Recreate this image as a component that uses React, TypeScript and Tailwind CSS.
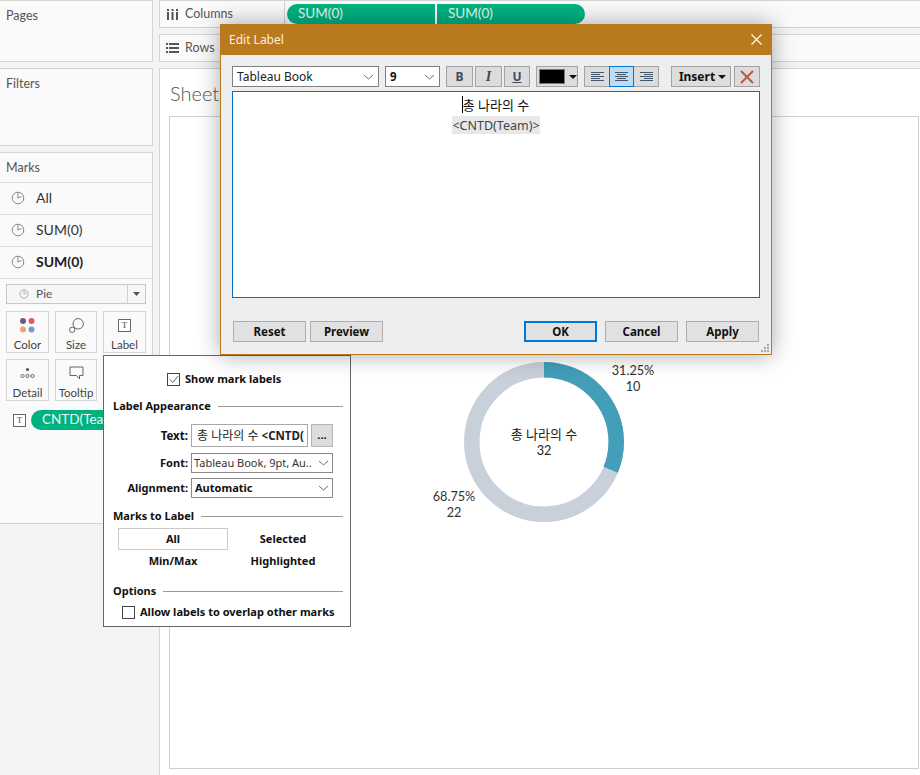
import React from 'react';

const PieIcon = ({ size = 14, color = '#8a8a8a' }: { size?: number; color?: string }) => (
  <svg width={size} height={size} viewBox="0 0 14 14" fill="none" stroke={color} strokeWidth="1">
    <circle cx="7" cy="7" r="5.8" />
    <path d="M7 1.5V7L10.5 5.5" />
  </svg>
);

const Chevron = ({ color = '#6b6b6b' }: { color?: string }) => (
  <svg width="11" height="6" viewBox="0 0 11 6" fill="none" stroke={color} strokeWidth="1">
    <path d="M1 1L5.5 5L10 1" />
  </svg>
);

const Caret = () => (
  <svg width="8" height="4" viewBox="0 0 8 4" fill="#111">
    <path d="M0 0H8L4 4Z" />
  </svg>
);

const AlignIcon = ({ side }: { side: 'left' | 'center' | 'right' }) => {
  const x = (w: number) => (side === 'left' ? 0 : side === 'center' ? (13 - w) / 2 : 13 - w);
  const rows = [13, 9, 13, 9, 13];
  return (
    <svg width="13" height="9" viewBox="0 0 13 9" stroke="#44566c" strokeWidth="1">
      {rows.map((w, i) => (
        <path key={i} d={`M${x(w)} ${i * 2 + 0.5}H${x(w) + w}`} />
      ))}
    </svg>
  );
};

const TBox = () => (
  <span className="flex h-[13px] w-[13px] items-center justify-center border border-[#666] bg-white text-[9px] leading-none text-[#444] [font-family:'Liberation_Serif',serif]">
    T
  </span>
);

const PanelTitle = ({ children }: { children: React.ReactNode }) => (
  <div className="pl-[6px] pt-[7px] text-[12.5px] leading-[16px] text-[#555]">{children}</div>
);

const MarkRow = ({ label, bold }: { label: string; bold?: boolean }) => (
  <div className="flex h-[32px] items-center border-b border-[#e0e0e0] pb-[2px] pl-[11px]">
    <PieIcon />
    <span className={`ml-[11px] text-[14px] ${bold ? 'font-bold text-[#222]' : 'text-[#333]'}`}>{label}</span>
  </div>
);

const MarkCard = ({ label, icon, className = 'w-[43px]' }: { label: string; icon: React.ReactNode; className?: string }) => (
  <div className={`flex h-[42px] flex-col items-center border border-[#d4d4d4] bg-[#fafafa] ${className}`}>
    <div className="flex h-[26px] items-center justify-center">{icon}</div>
    <span className="text-[11.5px] leading-[13px] text-[#444]">{label}</span>
  </div>
);

const ToolButton = ({ children, className = '' }: { children: React.ReactNode; className?: string }) => (
  <div className={`flex h-[21px] items-center justify-center border border-[#a3a3a3] bg-[#dcdcdc] text-[12px] font-bold text-[#3c4a5c] ${className}`}>
    {children}
  </div>
);

const DialogButton = ({ label, className = '' }: { label: string; className?: string }) => (
  <div className={`flex h-[21px] w-[73px] items-center justify-center border border-[#adadad] bg-[#e1e1e1] text-[11.5px] font-bold text-[#111] ${className}`}>
    {label}
  </div>
);

const SectionTitle = ({ label, className = '' }: { label: string; className?: string }) => (
  <div className={`flex items-center pl-[9px] pr-[7px] ${className}`}>
    <span className="text-[11px] font-bold leading-[14px] text-[#111]">{label}</span>
    <span className="ml-[7px] h-px flex-1 bg-[#999]" />
  </div>
);

const LabelPopover = () => (
  <div className="absolute left-[103px] top-[355px] z-10 h-[272px] w-[248px] border border-[#666] bg-white [font-family:'Noto_Sans','Noto_Sans_CJK_KR',sans-serif]">
    <div className="mt-[16px] flex h-[14px] items-center pl-[63px]">
      <span className="flex h-[13px] w-[13px] items-center justify-center border border-[#444]">
        <svg width="10" height="9" viewBox="0 0 10 9" fill="none" stroke="#666" strokeWidth="1">
          <path d="M1 4.5L3.8 7.5L9 1" />
        </svg>
      </span>
      <span className="ml-[5px] text-[11px] font-bold text-[#111]">Show mark labels</span>
    </div>
    <SectionTitle label="Label Appearance" className="mt-[13px]" />
    <div className="mt-[11px] flex h-[23px] items-center">
      <span className="w-[84px] text-right text-[11.5px] font-bold text-[#111]">Text:</span>
      <div className="ml-[3px] flex h-[23px] w-[117px] items-center overflow-hidden whitespace-nowrap border border-[#a8a8a8] pl-[5px] text-[11.5px] font-bold text-[#222]">
        <span className="text-[12px] font-normal">총 나라의 수&nbsp;</span>&lt;CNTD(
      </div>
      <div className="ml-[3px] flex h-[23px] w-[22px] items-center justify-center border border-[#b5b5b5] bg-[#dcdcdc] text-[11px] font-bold text-[#111]">
        ...
      </div>
    </div>
    <div className="mt-[6px] flex h-[20px] items-center">
      <span className="w-[84px] text-right text-[11px] font-bold text-[#111]">Font:</span>
      <div className="ml-[3px] flex h-[20px] w-[142px] items-center justify-between border border-[#8a8a8a] pl-[2px] pr-[3px] text-[11px] text-[#333]">
        <span>Tableau Book, 9pt, Au..</span>
        <Chevron />
      </div>
    </div>
    <div className="mt-[5px] flex h-[20px] items-center">
      <span className="w-[84px] text-right text-[11px] font-bold text-[#111]">Alignment:</span>
      <div className="ml-[3px] flex h-[20px] w-[142px] items-center justify-between border border-[#8a8a8a] pl-[3px] pr-[3px] text-[11px] font-bold text-[#111]">
        <span>Automatic</span>
        <Chevron />
      </div>
    </div>
    <SectionTitle label="Marks to Label" className="mt-[11px]" />
    <div className="ml-[14px] mt-[5px] grid w-[220px] grid-cols-2 text-center text-[11px] font-bold text-[#111]">
      <div className="flex h-[22px] items-center justify-center border border-[#c9c9c9]">All</div>
      <div className="flex h-[22px] items-center justify-center">Selected</div>
      <div className="flex h-[22px] items-center justify-center">Min/Max</div>
      <div className="flex h-[22px] items-center justify-center">Highlighted</div>
    </div>
    <SectionTitle label="Options" className="mt-[12px]" />
    <div className="ml-[18px] mt-[7px] flex h-[14px] items-center">
      <span className="h-[13px] w-[13px] border border-[#444]" />
      <span className="ml-[5px] text-[11px] font-bold text-[#111]">Allow labels to overlap other marks</span>
    </div>
  </div>
);

const EditLabelDialog = () => (
  <div className="absolute left-[220px] top-[24px] z-20 h-[331px] w-[552px] border border-[#b87a1c] bg-[#eeeeee] shadow-[0_0_22px_rgba(0,0,0,0.35)] [font-family:'Noto_Sans','Noto_Sans_CJK_KR',sans-serif]">
    <div className="-mx-px -mt-px flex h-[31px] items-center justify-between bg-[#b87a1c] pl-[9px] pr-[10px]">
      <span className="text-[12px] text-[#f7efe2]">Edit Label</span>
      <svg width="11" height="11" viewBox="0 0 11 11" stroke="#fff" strokeWidth="1.2">
        <path d="M0.5 0.5L10.5 10.5M10.5 0.5L0.5 10.5" />
      </svg>
    </div>
    <div className="pl-[11px] pt-[11px]">
      <div className="flex items-center">
        <div className="flex h-[21px] w-[147px] items-center justify-between border border-[#7f7f7f] bg-white pl-[4px] pr-[4px] text-[12px] text-[#222]">
          <span>Tableau Book</span>
          <Chevron />
        </div>
        <div className="ml-[6px] flex h-[21px] w-[55px] items-center justify-between border border-[#7f7f7f] bg-white pl-[4px] pr-[4px] text-[11.5px] font-bold text-[#111]">
          <span>9</span>
          <Chevron />
        </div>
        <ToolButton className="ml-[6px] w-[27px]">B</ToolButton>
        <ToolButton className="ml-[2px] w-[27px] italic [font-family:'Liberation_Serif',serif] !text-[14px]">I</ToolButton>
        <ToolButton className="ml-[2px] w-[26px] underline">U</ToolButton>
        <div className="ml-[6px] flex h-[21px] w-[42px] items-center border border-[#a3a3a3] bg-[#dcdcdc] pl-[2px]">
          <span className="h-[15px] w-[26px] border border-[#777] bg-black" />
          <span className="ml-[4px] flex"><Caret /></span>
        </div>
        <div className="ml-[6px] flex h-[21px] w-[75px] border border-[#a3a3a3] bg-[#dcdcdc]">
          <div className="flex flex-1 items-center justify-center"><AlignIcon side="left" /></div>
          <div className="-my-px flex w-[25px] items-center justify-center border border-[#0078d7] bg-[#bfdcf5]"><AlignIcon side="center" /></div>
          <div className="flex flex-1 items-center justify-center"><AlignIcon side="right" /></div>
        </div>
        <ToolButton className="ml-[12px] w-[60px] pl-[3px] !text-[#111]">
          Insert<span className="ml-[3px] flex"><Caret /></span>
        </ToolButton>
        <ToolButton className="ml-[3px] w-[26px]">
          <svg width="14" height="14" viewBox="0 0 14 14" stroke="#b85a3e" strokeWidth="2">
            <path d="M1 1L13 13M13 1L1 13" />
          </svg>
        </ToolButton>
      </div>
      <div className="mt-[4px] flex h-[207px] w-[528px] flex-col items-center border border-[#0070c9] bg-white">
        <div className="relative mt-[3px] h-[21px] text-[13px] leading-[20px] text-[#111]">
          <span className="absolute left-[-1px] top-px h-[17px] w-px bg-black" />
          총 나라의 수
        </div>
        <div className="flex h-[18px] items-center bg-[#e8e8e8] pt-[2px] text-[12.5px] text-[#444]">&lt;CNTD(Team)&gt;</div>
      </div>
      <div className="mt-[23px] flex w-[528px] pl-px">
        <DialogButton label="Reset" />
        <DialogButton label="Preview" className="ml-[4px]" />
        <DialogButton label="OK" className="ml-[141px] !border-2 !border-[#0078d7]" />
        <DialogButton label="Cancel" className="ml-[8px]" />
        <DialogButton label="Apply" className="ml-[8px]" />
      </div>
    </div>
    <svg className="absolute bottom-[1px] right-[1px]" width="9" height="9" viewBox="0 0 9 9" fill="#aaa">
      <rect x="6" y="0" width="2" height="2" />
      <rect x="3" y="3" width="2" height="2" />
      <rect x="6" y="3" width="2" height="2" />
      <rect x="0" y="6" width="2" height="2" />
      <rect x="3" y="6" width="2" height="2" />
      <rect x="6" y="6" width="2" height="2" />
    </svg>
  </div>
);

const Donut = () => {
  const r = 72.25;
  const circumference = 2 * Math.PI * r;
  return (
    <div className="relative h-[160px] w-[160px] text-[12.7px] leading-[16px] text-[#333]">
      <svg width="160" height="160" viewBox="0 0 160 160" fill="none" strokeWidth="15.5">
        <circle cx="80" cy="80" r={r} stroke="#c8d0d9" />
        <circle
          cx="80"
          cy="80"
          r={r}
          stroke="#429eb9"
          strokeDasharray={`${circumference * 0.3125} ${circumference}`}
          transform="rotate(-90 80 80)"
        />
      </svg>
      <div className="absolute left-[30px] top-[64px] w-[100px] text-center text-[#222]">
        <div className="text-[13px]">총 나라의 수</div>
        <div>32</div>
      </div>
      <div className="absolute left-[139px] top-0 w-[60px] text-center">
        <div>31.25%</div>
        <div>10</div>
      </div>
      <div className="absolute left-[-40px] top-[126px] w-[60px] text-center">
        <div>68.75%</div>
        <div>22</div>
      </div>
    </div>
  );
};

const Shelf = ({ icon, label, pills, className = '' }: { icon: React.ReactNode; label: string; pills?: boolean; className?: string }) => (
  <div className={`flex h-[28px] border-y border-[#d4d4d4] border-l bg-[#fafafa] ${className}`}>
    <div className="flex w-[125px] items-center border-r border-[#d4d4d4] pl-[6px]">
      <span className="flex w-[13px] justify-center">{icon}</span>
      <span className="ml-[6px] text-[12.5px] text-[#555]">{label}</span>
    </div>
    {pills && (
      <div className="ml-[2px] flex items-center gap-[2px]">
        <div className="flex h-[20px] w-[148px] items-center rounded-l-[10px] bg-[#00b180] pb-px pl-[11px] text-[13.5px] text-[#e8f7f1]">SUM(0)</div>
        <div className="flex h-[20px] w-[148px] items-center rounded-r-[10px] bg-[#00b180] pb-px pl-[11px] text-[13.5px] text-[#e8f7f1]">SUM(0)</div>
      </div>
    )}
  </div>
);

const App = () => (
  <div className="relative flex h-[775px] w-[920px] overflow-hidden bg-[#f3f3f3] [font-family:Lato,'Noto_Sans_CJK_KR',sans-serif]">
    <aside className="w-[153px] shrink-0">
      <div className="h-[62px] border-y border-r border-[#d4d4d4] bg-[#fafafa]">
        <PanelTitle>Pages</PanelTitle>
      </div>
      <div className="mt-[6px] h-[78px] border-y border-r border-[#d4d4d4] bg-[#fafafa]">
        <PanelTitle>Filters</PanelTitle>
      </div>
      <div className="mt-[6px] h-[372px] border-y border-r border-[#d4d4d4] bg-[#fafafa]">
        <div className="h-[30px] border-b border-[#e0e0e0]">
          <PanelTitle>Marks</PanelTitle>
        </div>
        <MarkRow label="All" />
        <MarkRow label="SUM(0)" />
        <MarkRow label="SUM(0)" bold />
        <div className="ml-[6px] mt-[5px] flex h-[20px] w-[140px] items-center border border-[#c8c8c8] bg-[#f6f6f6]">
          <span className="ml-[12px] flex"><PieIcon size={10} color="#999" /></span>
          <span className="ml-[7px] flex-1 text-[12px] text-[#555]">Pie</span>
          <span className="flex h-full w-[18px] items-center justify-center border-l border-[#d0d0d0]">
            <svg width="7" height="4" viewBox="0 0 7 4" fill="#555"><path d="M0 0H7L3.5 4Z" /></svg>
          </span>
        </div>
        <div className="ml-[6px] mt-[7px] flex gap-[6px]">
          <MarkCard
            label="Color"
            icon={
              <svg width="15" height="15" viewBox="0 0 15 15">
                <circle cx="3" cy="3" r="3" fill="#75588b" />
                <circle cx="11.5" cy="3" r="3" fill="#e8546a" />
                <circle cx="3" cy="11.5" r="3" fill="#eea36c" />
                <circle cx="11.5" cy="11.5" r="3" fill="#6f9bd1" />
              </svg>
            }
          />
          <MarkCard
            label="Size"
            className="w-[42px]"
            icon={
              <svg width="15" height="15" viewBox="0 0 15 15" fill="none" stroke="#666" strokeWidth="1">
                <circle cx="9.2" cy="5.8" r="5.2" fill="#fafafa" />
                <circle cx="3.2" cy="11.8" r="2.7" fill="#fafafa" />
              </svg>
            }
          />
          <MarkCard label="Label" icon={<TBox />} />
        </div>
        <div className="ml-[6px] mt-[6px] flex gap-[6px]">
          <MarkCard
            label="Detail"
            icon={
              <svg width="15" height="12" viewBox="0 0 15 12" fill="none" stroke="#666" strokeWidth="1">
                <circle cx="7.5" cy="2.5" r="1.6" fill="#555" stroke="none" />
                <circle cx="2.5" cy="9" r="1.6" />
                <circle cx="7.5" cy="9" r="1.6" />
                <circle cx="12.5" cy="9" r="1.6" />
              </svg>
            }
          />
          <MarkCard
            label="Tooltip"
            className="w-[42px]"
            icon={
              <svg width="15" height="14" viewBox="0 0 15 14" fill="none" stroke="#666" strokeWidth="1">
                <path d="M1 1H14V9.5H10.5V13L7.5 9.5H1Z" />
              </svg>
            }
          />
        </div>
        <div className="ml-[13px] mt-[9px] flex items-center">
          <TBox />
          <div className="ml-[5px] flex h-[20px] w-[90px] items-center overflow-hidden whitespace-nowrap rounded-l-[10px] bg-[#00b180] pb-px pl-[11px] text-[13.5px] text-[#e8f7f1]">
            CNTD(Team)
          </div>
        </div>
      </div>
    </aside>
    <main className="ml-[6px] flex flex-1 flex-col">
      <Shelf
        label="Columns"
        pills
        icon={
          <svg width="11" height="11" viewBox="0 0 11 11" fill="#555">
            <rect x="0" y="3" width="2" height="8" />
            <rect x="4.5" y="3" width="2" height="8" />
            <rect x="9" y="3" width="2" height="8" />
            <rect x="0" y="0" width="2" height="2" />
            <rect x="4.5" y="0" width="2" height="2" />
            <rect x="9" y="0" width="2" height="2" />
          </svg>
        }
      />
      <Shelf
        label="Rows"
        className="mt-[6px]"
        icon={
          <svg width="13" height="10" viewBox="0 0 13 10" fill="#555">
            <rect x="0" y="0" width="2" height="2" />
            <rect x="3" y="0" width="10" height="2" />
            <rect x="0" y="4" width="2" height="2" />
            <rect x="3" y="4" width="10" height="2" />
            <rect x="0" y="8" width="2" height="2" />
            <rect x="3" y="8" width="10" height="2" />
          </svg>
        }
      />
      <section className="mt-[6px] flex flex-1 flex-col border-l border-t border-[#d4d4d4] bg-white pl-[9px] pr-[1px] pb-[6px]">
        <div className="flex h-[47px] items-center pl-[1px] pt-px text-[20px] font-light text-[#555]">Sheet 1</div>
        <div className="flex flex-1 items-center justify-center border border-[#cfcfcf] pb-[2px]">
          <Donut />
        </div>
      </section>
    </main>
    <LabelPopover />
    <EditLabelDialog />
  </div>
);

export default App;
